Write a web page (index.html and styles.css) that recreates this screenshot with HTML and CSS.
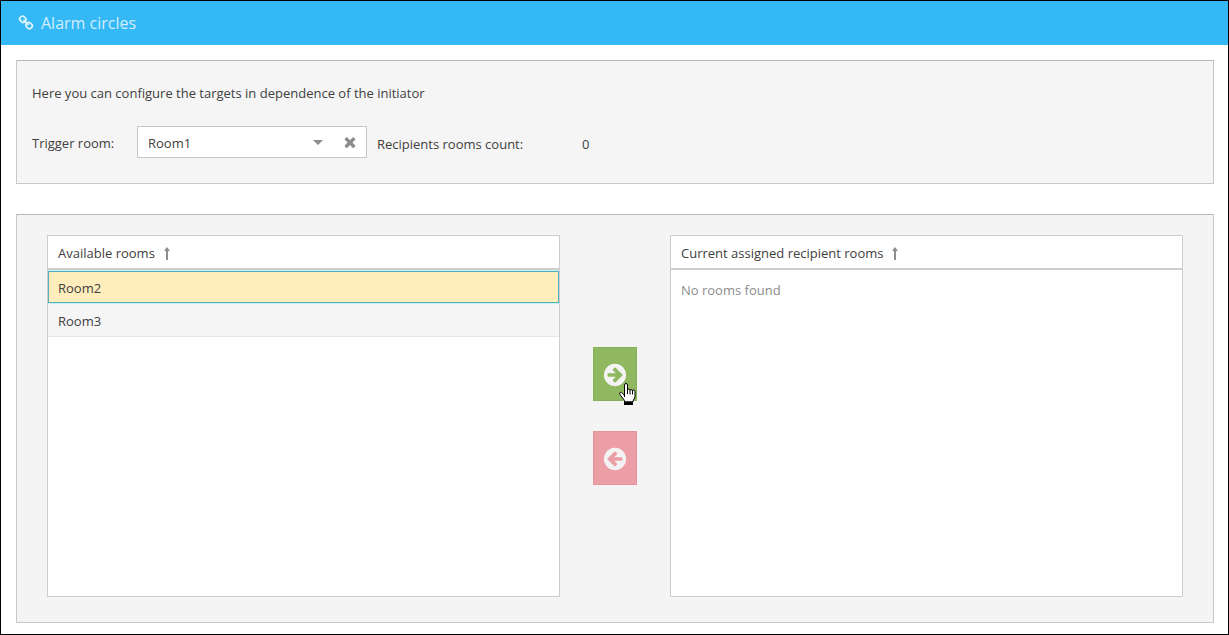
FILE: index.html
```html
<!DOCTYPE html>
<html lang="en">
<head>
<meta charset="utf-8">
<title>Alarm circles</title>
<link rel="stylesheet" href="styles.css">
</head>
<body>
<div class="window">
  <header class="titlebar">
    <svg class="titlebar-icon" viewBox="0 0 1792 1792" aria-hidden="true"><path d="M1520 1216q0-40-28-68l-208-208q-28-28-68-28-42 0-72 32 3 3 19 18.500t21.500 21.500 15 19 13 25.500 3.500 27.500q0 40-28 68t-68 28q-15 0-27.500-3.500t-25.500-13-19-15-21.500-21.500-18.500-19q-33 31-33 73 0 40 28 68l206 207q27 27 68 27 40 0 68-26l147-146q28-28 28-67zm-703-705q0-40-28-68l-206-207q-28-28-68-28-39 0-68 27l-147 146q-28 28-28 67 0 40 28 68l208 208q27 27 68 27 42 0 72-31-3-3-19-18.500t-21.500-21.500-15-19-13-25.500-3.500-27.500q0-40 28-68t68-28q15 0 27.500 3.500t25.500 13 19 15 21.500 21.500 18.500 19q33-31 33-73zm895 705q0 120-85 203l-147 146q-83 83-203 83-121 0-204-85l-206-207q-83-83-83-203 0-123 88-209l-88-88q-86 88-208 88-120 0-204-84l-208-208q-84-84-84-204t85-203l147-146q83-83 203-83 121 0 204 85l206 207q83 83 83 203 0 123-88 209l88 88q86-88 208-88 120 0 204 84l208 208q84 84 84 204z"/></svg>
    <h1 class="title">Alarm circles</h1>
  </header>
  <main class="content">
    <section class="panel settings">
      <p class="intro">Here you can configure the targets in dependence of the initiator</p>
      <div class="settings-row">
        <label class="trigger-label" for="trigger">Trigger room:</label>
        <div class="combo">
          <select class="combo-select" id="trigger">
            <option selected>Room1</option>
            <option>Room2</option>
            <option>Room3</option>
          </select>
          <svg class="combo-caret" viewBox="0 0 10 5" aria-hidden="true"><path d="M0 0h10L5 5z"/></svg>
          <button class="combo-clear" type="button" aria-label="Clear">
            <svg class="clear-icon" viewBox="0 0 1792 1792" aria-hidden="true"><path d="M1490 1322q0 40-28 68l-136 136q-28 28-68 28t-68-28l-294-294-294 294q-28 28-68 28t-68-28l-136-136q-28-28-28-68t28-68l294-294-294-294q-28-28-28-68t28-68l136-136q28-28 68-28t68 28l294 294 294-294q28-28 68-28t68 28l136 136q28 28 28 68t-28 68l-294 294 294 294q28 28 28 68z"/></svg>
          </button>
        </div>
        <span class="count-label">Recipients rooms count:</span>
        <output class="count">0</output>
      </div>
    </section>
    <section class="panel transfer">
      <div class="list">
        <table class="rooms">
          <thead>
            <tr><th class="rooms-head" scope="col">Available rooms<svg class="sort-icon" viewBox="0 0 6 13" aria-hidden="true"><path d="M3 0l3 4H4v9H2V4H0z"/></svg></th></tr>
          </thead>
          <tbody>
            <tr><td class="room room-selected">Room2</td></tr>
            <tr><td class="room room-alt">Room3</td></tr>
          </tbody>
        </table>
      </div>
      <div class="actions">
        <button class="action action-add" type="button" aria-label="Assign room">
          <svg class="action-icon" viewBox="0 0 1792 1792" aria-hidden="true"><path d="M1413 896q0-27-18-45l-91-91-362-362q-18-18-45-18t-45 18l-91 91q-18 18-18 45t18 45l189 189h-502q-26 0-45 19t-19 45v128q0 26 19 45t45 19h502l-189 189q-18 18-18 45t18 45l91 91q18 18 45 18t45-18l362-362 91-91q18-18 18-45zm251 0q0 209-103 385.500t-279.500 279.500-385.500 103-385.500-103-279.500-279.500-103-385.500 103-385.500 279.500-279.500 385.500-103 385.500 103 279.500 279.500 103 385.500z"/></svg>
          <svg class="pointer" viewBox="0 0 17 23" aria-hidden="true">
            <path class="pointer-hand" d="M5.500 14V2q0-1.500 1.500-1.500T8.500 2v5q0-1 1.200-1t1.300 1.500q0-1 1.200-1t1.300 1.500q0-1 1.200-1T16 8.500V14l-2 4v1H5.500v-1.500L1 11.500q-.8-1.800.5-2.300 1-.2 2 1.300l2 2z"/>
            <path class="pointer-line" d="M8.500 7v4M11 7.500v4M13.500 8v3.500"/>
            <path class="pointer-cuff" d="M5 18.500h9V22H5z"/>
          </svg>
        </button>
        <button class="action action-remove" type="button" aria-label="Remove room">
          <svg class="action-icon action-icon-left" viewBox="0 0 1792 1792" aria-hidden="true"><path d="M1413 896q0-27-18-45l-91-91-362-362q-18-18-45-18t-45 18l-91 91q-18 18-18 45t18 45l189 189h-502q-26 0-45 19t-19 45v128q0 26 19 45t45 19h502l-189 189q-18 18-18 45t18 45l91 91q18 18 45 18t45-18l362-362 91-91q18-18 18-45zm251 0q0 209-103 385.500t-279.500 279.500-385.500 103-385.500-103-279.500-279.500-103-385.500 103-385.500 279.500-279.500 385.500-103 385.500 103 279.500 279.500 103 385.500z"/></svg>
        </button>
      </div>
      <div class="list">
        <table class="rooms">
          <thead>
            <tr><th class="rooms-head" scope="col">Current assigned recipient rooms<svg class="sort-icon" viewBox="0 0 6 13" aria-hidden="true"><path d="M3 0l3 4H4v9H2V4H0z"/></svg></th></tr>
          </thead>
          <tbody>
            <tr><td class="rooms-empty">No rooms found</td></tr>
          </tbody>
        </table>
      </div>
    </section>
  </main>
</div>
</body>
</html>
```
FILE: styles.css
```css
* {
  box-sizing: border-box;
}

body {
  margin: 0;
  background: #fff;
  color: #404040;
  font: 13px/20px "Open Sans", "Noto Sans", sans-serif;
}

.window {
  display: flex;
  flex-direction: column;
  min-height: 100vh;
  border: 1px solid #000;
}

.titlebar {
  display: flex;
  align-items: center;
  gap: 7px;
  padding: 10px 17px;
  background: #35b8f6;
  color: #e2f5ff;
}

.titlebar-icon {
  width: 16px;
  height: 16px;
  fill: currentColor;
}

.title {
  margin: 0;
  color: #d3effd;
  font-size: 16px;
  font-weight: 400;
  line-height: 24px;
}

.content {
  display: flex;
  flex: 1;
  flex-direction: column;
  gap: 30px;
  padding: 15px 14px 11px 15px;
}

.panel {
  border: 1px solid #c8c8c8;
  border-top-color: #b8b8b8;
  background: #f5f5f5;
}

.settings {
  padding: 22px 15px 25px;
}

.intro {
  margin: 0 0 23px;
}

.settings-row {
  display: flex;
  align-items: center;
}

.trigger-label {
  width: 105px;
  padding-top: 2px;
}

.combo {
  display: grid;
  grid-template-columns: 1fr 32px 32px;
  align-items: center;
  width: 230px;
  height: 32px;
  margin-right: 10px;
  border: 1px solid #c8c8c8;
  background: #fff;
}

.combo-select {
  grid-area: 1 / 1 / 2 / 3;
  width: 100%;
  height: 30px;
  padding: 2px 10px 0;
  appearance: none;
  border: 0;
  background: transparent;
  color: inherit;
  font: inherit;
}

.combo-caret {
  grid-area: 1 / 2;
  justify-self: center;
  width: 10px;
  height: 5px;
  fill: #8c8c8c;
  pointer-events: none;
}

.combo-clear {
  display: flex;
  align-items: center;
  justify-content: center;
  height: 30px;
  padding: 0;
  border: 0;
  background: transparent;
}

.clear-icon {
  width: 16px;
  height: 16px;
  fill: #8c8c8c;
}

.count-label {
  width: 205px;
  padding-top: 4px;
}

.count {
  padding-top: 4px;
}

.transfer {
  display: grid;
  flex: 1;
  grid-template-columns: 1fr 110px 1fr;
  padding: 20px 30px 25px;
  background: #f4f4f4;
}

.list {
  border: 1px solid #cdcdcd;
  background: #fff;
}

.rooms {
  width: 100%;
  border-collapse: separate;
  border-spacing: 0;
}

.rooms-head {
  padding: 7px 10px 5px;
  border-bottom: 2px solid #cdcdcd;
  font-weight: 400;
  text-align: left;
}

.sort-icon {
  width: 6px;
  height: 13px;
  margin-left: 9px;
  fill: #8c8c8c;
  vertical-align: -2px;
}

.room {
  padding: 7px 10px 5px;
  border-bottom: 1px solid #e6e6e6;
}

.room-selected {
  border-top: 1px solid #c4f0f6;
  border-bottom-color: #c4f0f6;
  background: #ffeebc;
  box-shadow: inset 0 0 0 1px #55aebb;
}

.room-alt {
  background: #f5f5f5;
}

.rooms-empty {
  padding: 10px;
  color: #8c8c8c;
}

.actions {
  display: flex;
  flex-direction: column;
  align-items: center;
  justify-content: center;
  gap: 30px;
}

.action {
  position: relative;
  display: flex;
  align-items: center;
  justify-content: center;
  width: 44px;
  height: 54px;
  padding: 2px 0 0;
  border: 1px solid;
}

.action-add {
  border-color: #87b158;
  background: #8fb860;
}

.action-remove {
  border-color: #e3949c;
  background: #ec9ea6;
}

.action-icon {
  width: 26px;
  height: 26px;
  fill: #f3f3f3;
}

.action-icon-left {
  transform: scaleX(-1);
}

.pointer {
  position: absolute;
  right: 0;
  bottom: -6px;
  width: 17px;
  height: 23px;
}

.pointer-hand {
  fill: #fff;
  stroke: #000;
}

.pointer-line {
  fill: none;
  stroke: #000;
}

.pointer-cuff {
  fill: #000;
}
```
